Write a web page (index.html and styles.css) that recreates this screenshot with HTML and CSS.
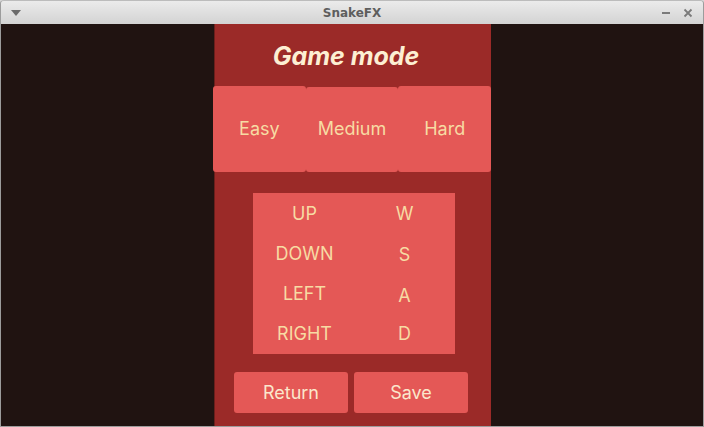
FILE: index.html
```html
<!DOCTYPE html>
<html>
<head>
<meta charset="utf-8">
<link rel="stylesheet" href="styles.css">
</head>
<body>
<div class="window">
  <div class="titlebar">
    <svg class="menu-icon" width="10" height="6" viewBox="0 0 10 6"><polygon points="0,0 10,0 5,6" fill="#6b6b6b"/></svg>
    <span class="win-title">SnakeFX</span>
    <div class="win-controls">
      <svg width="10" height="10" viewBox="0 0 10 10"><rect x="1" y="4" width="8" height="2" fill="#7a7a7a"/></svg>
      <svg width="10" height="10" viewBox="0 0 10 10"><path d="M1.5 1.5 L8.5 8.5 M8.5 1.5 L1.5 8.5" stroke="#7a7a7a" stroke-width="1.8"/></svg>
    </div>
  </div>
  <div class="content">
    <div class="panel">
      <h1 class="title">Game mode</h1>
      <div class="modes">
        <div class="mode">Easy</div>
        <div class="mode mode-mid">Medium</div>
        <div class="mode">Hard</div>
      </div>
      <div class="keys">
        <div class="key-label">UP</div><div class="key-value">W</div>
        <div class="key-label">DOWN</div><div class="key-value">S</div>
        <div class="key-label">LEFT</div><div class="key-value">A</div>
        <div class="key-label">RIGHT</div><div class="key-value">D</div>
      </div>
      <div class="actions">
        <div class="btn">Return</div>
        <div class="btn">Save</div>
      </div>
    </div>
  </div>
</div>
</body>
</html>
```
FILE: styles.css
```css
* { box-sizing: border-box; margin: 0; padding: 0; }
html, body { width: 704px; height: 427px; overflow: hidden; background: #d6d6d6; }
body { font-family: Inter, "Noto Sans", sans-serif; }

.window {
  width: 704px;
  height: 427px;
  display: flex;
  flex-direction: column;
  border: 1px solid #9c9c9c;
  border-top-color: #bcbcbc;
  border-radius: 4px 4px 0 0;
  overflow: hidden;
}

.titlebar {
  height: 23px;
  flex: none;
  display: flex;
  align-items: center;
  justify-content: space-between;
  padding: 0 10px 0 10px;
  background: linear-gradient(#ebebeb, #d3d3d3);
  position: relative;
}
.win-title {
  position: absolute;
  left: 0; right: 0;
  text-align: center;
  font-family: "DejaVu Sans", sans-serif;
  font-weight: bold;
  font-size: 12px;
  color: #5e5e5e;
  pointer-events: none;
}
.win-controls { display: flex; gap: 12px; align-items: center; }

.content {
  flex: 1;
  background: #201311;
  display: flex;
  justify-content: center;
  padding-left: 2px;
}

.panel {
  width: 276px;
  background: #9b2a28;
  display: flex;
  flex-direction: column;
  align-items: center;
  box-shadow: -1px 0 0 #6a1f1c;
}

.title {
  height: 62px;
  display: flex;
  align-items: center;
  justify-content: center;
  font-size: 25px;
  font-weight: 700;
  font-style: italic;
  color: #fdefd3;
  padding-top: 2px;
  margin-right: 14px;
}

.modes {
  align-self: stretch;
  margin-left: -2px;
  display: flex;
  height: 86px;
}
.mode {
  flex: 1;
  background: #e45856;
  border-radius: 3px;
  display: flex;
  align-items: center;
  justify-content: center;
  color: #f7dba3;
  font-size: 18px;
  padding-bottom: 2px;
}
.mode-mid { margin-top: 1px; }

.keys {
  margin-top: 21px;
  margin-left: 2px;
  width: 202px;
  height: 161px;
  background: #e45856;
  display: grid;
  grid-template-columns: 1fr 1fr;
  grid-template-rows: repeat(4, 1fr);
  padding: 0 0 1px 0;
  color: #f7dba3;
  font-size: 18px;
}
.key-label, .key-value {
  display: flex;
  align-items: center;
  justify-content: center;
}
.key-label { padding-left: 2px; }
.key-value:nth-child(4) { padding-top: 2px; }
.key-value:nth-child(6) { padding-top: 5px; }

.actions {
  margin-top: 18px;
  margin-right: 4px;
  display: flex;
  gap: 6px;
}
.btn {
  width: 114px;
  height: 41px;
  background: #e45856;
  border-radius: 3px;
  display: flex;
  align-items: center;
  justify-content: center;
  color: #fbe7cc;
  font-size: 18px;
}
```
